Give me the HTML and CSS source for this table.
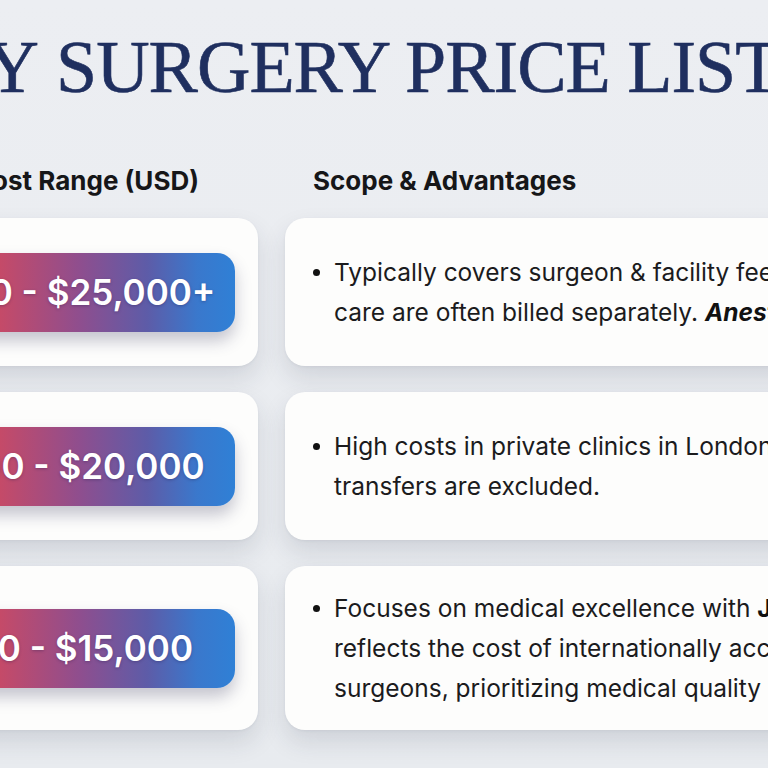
FILE: index.html
```html
<!DOCTYPE html>
<html lang="en">
<head>
<meta charset="utf-8">
<title>Rhinoplasty Surgery Price List</title>
<link rel="stylesheet" href="styles.css">
</head>
<body>
<main class="page">
  <h1 class="title"><span class="title-lead"><span>RHINOPLASTY</span></span><span class="title-rest">SURGERY PRICE LIST</span></h1>

  <section class="table">
    <div class="head head-cost">Cost Range (USD)</div>
    <div class="head head-scope">Scope &amp; Advantages</div>

    <div class="card card-cost"><div class="pill">$15,000 - $25,000+</div></div>
    <div class="card card-scope">
      <p class="bullet">Typically covers surgeon &amp; facility fees; tests and post-op<br>care are often billed separately. <b><i>Anesthesia extra.</i></b></p>
    </div>

    <div class="card card-cost"><div class="pill">$10,000 - $20,000</div></div>
    <div class="card card-scope">
      <p class="bullet">High costs in private clinics in London; flights and<br>transfers are excluded.</p>
    </div>

    <div class="card card-cost"><div class="pill">$8,000 - $15,000</div></div>
    <div class="card card-scope">
      <p class="bullet">Focuses on medical excellence with <b>JCI-accredited</b> hospitals;<br>reflects the cost of internationally accredited board-certified<br>surgeons, prioritizing medical quality over cost.</p>
    </div>
  </section>
</main>
</body>
</html>
```

FILE: styles.css
```css
html, body {
  margin: 0;
  padding: 0;
  width: 768px;
  height: 768px;
  overflow: hidden;
}

body {
  background: linear-gradient(180deg, #eceef2 0%, #e8ebef 100%);
  font-family: Inter, "Noto Sans", "Liberation Sans", sans-serif;
  color: #1b1b1d;
}

.page {
  padding-top: 22px;
}

.title {
  margin: 0 0 54px 0;
  display: flex;
  white-space: nowrap;
  font-family: "Liberation Serif", "Times New Roman", serif;
  font-weight: 400;
  font-size: 74px;
  line-height: 90px;
  letter-spacing: -1px;
  color: #1f2f5f;
  padding-left: 38px;
  -webkit-text-stroke: 0.6px #1f2f5f;
}

.title-lead {
  width: 0;
  display: flex;
  justify-content: flex-end;
  margin-right: 18px;
}

.table {
  display: grid;
  grid-template-columns: 426px 720px;
  column-gap: 27px;
  row-gap: 26px;
  margin-left: -168px;
}

.head {
  font-weight: 700;
  font-size: 26px;
  line-height: 30px;
  color: #161618;
  white-space: nowrap;
  margin-bottom: -4px;
}

.head-cost {
  text-align: right;
  padding-right: 59px;
}

.head-scope {
  padding-left: 28px;
}

.card {
  background: #fdfdfc;
  border-radius: 20px;
  box-shadow: 0 12px 24px rgba(40, 50, 70, 0.13), 0 1px 3px rgba(40, 50, 70, 0.06);
  min-height: 148px;
  box-sizing: border-box;
  display: flex;
  align-items: center;
}

.card-cost {
  justify-content: flex-end;
  padding: 0 23px;
}

.pill {
  width: 394px;
  height: 79px;
  border-radius: 18px;
  display: flex;
  align-items: center;
  justify-content: center;
  white-space: nowrap;
  color: #ffffff;
  font-weight: 600;
  font-size: 35px;
  background: linear-gradient(90deg, #d24a5e 0%, #c84a66 37%, #8f4e8e 59%, #5d5ca8 77%, #3a78cc 90%, #2f80d6 100%);
  box-shadow: 0 9px 16px rgba(50, 50, 90, 0.28);
  text-shadow: 0 1px 3px rgba(40, 30, 80, 0.35);
}

.card-scope {
  padding: 22px 28px;
}

.bullet {
  margin: 0;
  position: relative;
  padding-left: 21px;
  font-size: 24.5px;
  line-height: 40px;
  white-space: nowrap;
  color: #1b1b1d;
}

.bullet::before {
  content: "";
  position: absolute;
  left: 0;
  top: 17px;
  width: 7px;
  height: 7px;
  border-radius: 50%;
  background: #111;
}

.bullet b {
  font-weight: 700;
  color: #111;
}
```
